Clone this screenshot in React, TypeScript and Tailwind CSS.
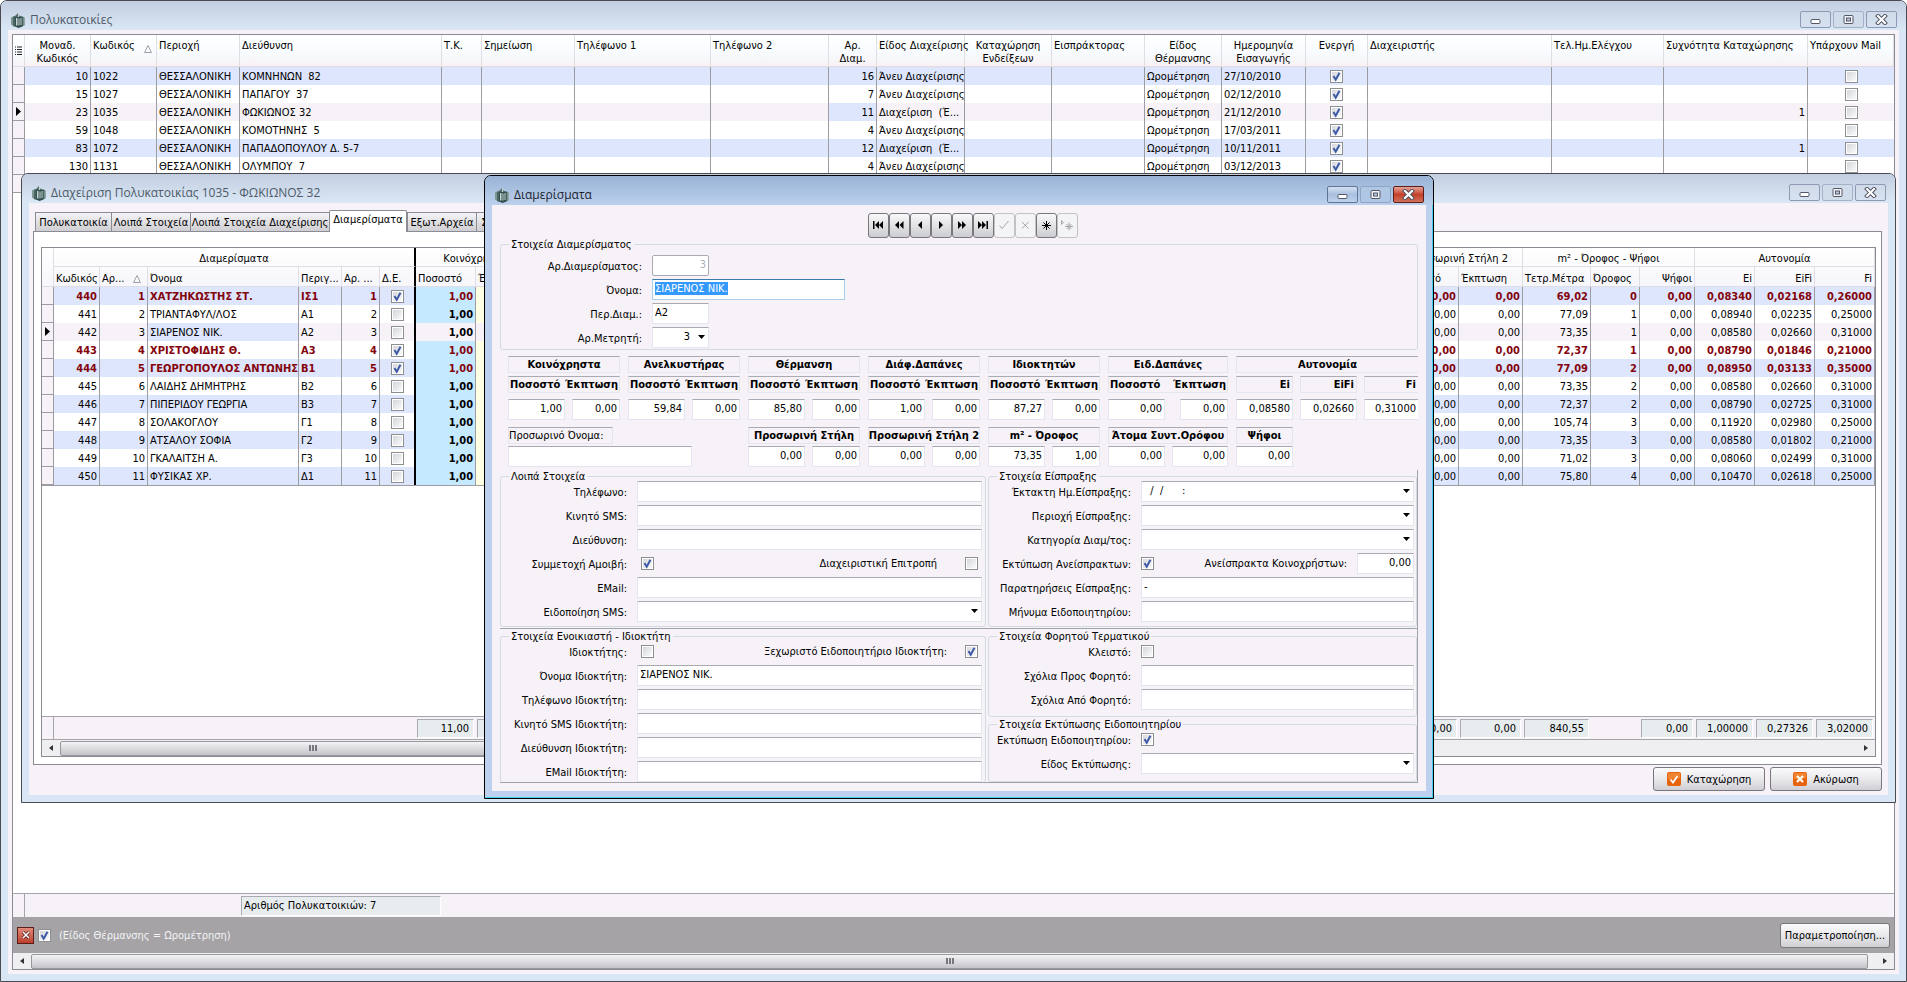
import { useEffect, useRef, type ReactNode } from "react";
import clsx from "clsx";

/* ---------- small shared pieces ---------- */

function AppIcon() {
  return (
    <svg width="16" height="16" viewBox="0 0 16 16" className="shrink-0">
      <path d="M1 5.500l3-1.500v10.500l-3-2z" fill="#7d9490" />
      <path d="M3 5l2.500-1.500v11.500L3 14z" fill="#4a6764" />
      <path d="M12 4l3 2v7l-3 1.500z" fill="#5d7a76" />
      <path d="M13.500 5.500L15 6v6.500l-1.500 1z" fill="#93a8a4" />
      <path d="M5 4.500L8 3l4.500 2v9.500L8.500 16 5 14.500z" fill="#2f4e4d" />
      <path d="M6 6h1.500v7.500H6zM8.500 6.500h1v7h-1zM10.500 6h1v7h-1z" fill="#c9d6d4" />
      <path d="M4.500 4.500L8 1l1 .5V4l3 .5-3.500.8z" fill="#56706e" />
      <path d="M8.500 1v4" stroke="#dfe8e8" strokeWidth=".8" />
    </svg>
  );
}

function WindowButtons({ active }: { active?: boolean }) {
  const base = "flex h-[17px] w-[31px] items-center justify-center rounded-[2px] border";
  const calm = active
    ? "border-[#5f7695] bg-linear-to-b from-[#d3e0f1] via-[#a9c0de] to-[#bdd2ec]"
    : "border-[#8c9bb3] bg-linear-to-b from-[#d0dae9] to-[#d6e2f1]";
  return (
    <div className="flex gap-0.5">
      <button aria-label="Ελαχιστοποίηση" className={clsx(base, calm)}>
        <svg width="11" height="9" viewBox="0 0 11 9">
          <rect x="1" y="4.500" width="9" height="4" rx="1" fill="#fff" stroke="#535666" />
        </svg>
      </button>
      <button
        aria-label="Μεγιστοποίηση"
        className={clsx(base, active ? "border-[#8ea6c6] bg-[#b0c7e4]" : "border-[#a3b2c9] bg-[#d0dcea]")}
      >
        <svg width="11" height="9" viewBox="0 0 11 9">
          <rect x="1" y=".5" width="9" height="8" rx="1" fill="#f2f4f8" stroke="#535666" />
          <rect x="3.500" y="3" width="4" height="3" fill="#b9c9de" stroke="#535666" />
        </svg>
      </button>
      <button
        aria-label="Κλείσιμο"
        className={clsx(
          base,
          active ? "border-[#5c1d1a] bg-linear-to-b from-[#e3a397] via-[#c4402a] to-[#d0705a]" : calm,
        )}
      >
        <svg width="13" height="11" viewBox="0 0 13 11">
          <path d="M3 2l7 7M10 2L3 9" stroke="#4a4d5c" strokeWidth="4" strokeLinecap="square" />
          <path d="M3 2l7 7M10 2L3 9" stroke="#fff" strokeWidth="2.200" strokeLinecap="square" />
        </svg>
      </button>
    </div>
  );
}

function Window({
  title,
  active,
  className,
  children,
}: {
  title: string;
  active?: boolean;
  className?: string;
  children: ReactNode;
}) {
  return (
    <section
      className={clsx(
        "flex flex-col overflow-hidden rounded-t-[7px] border",
        active ? "border-black bg-[#bdd1ee] shadow-[inset_-1px_-1px_0_#3fd0f0]" : "border-[#4a4a50] bg-[#d9e6f6]",
        className,
      )}
    >
      <header
        className={clsx(
          "flex h-[29px] shrink-0 items-center justify-between bg-linear-to-b pr-[9px] pl-[9px] pt-2",
          active ? "from-[#9ab3d6] to-[#bbd0ec]" : "from-[#c3cfe1] to-[#dae7f5]",
        )}
      >
        <h1
          className={clsx(
            "flex items-center gap-1 font-['Open_Sans',sans-serif] text-xs",
            active ? "text-[#1c2430]" : "text-[#4e5a68]",
          )}
        >
          <AppIcon />
          {title}
        </h1>
        <WindowButtons active={active} />
      </header>
      <div className="mx-[7px] mb-[7px] flex min-h-0 flex-1 flex-col bg-[#f6f2f7]">{children}</div>
    </section>
  );
}

function Check({ id, label, checked }: { id?: string; label?: string; checked?: boolean }) {
  return (
    <span className="relative inline-block size-[13px] align-middle">
      <input
        id={id}
        aria-label={label}
        type="checkbox"
        defaultChecked={checked}
        className="peer block size-[13px] appearance-none border border-[#8e8f8f] bg-linear-to-br from-[#cfd2d8] to-white ring-1 ring-white ring-inset"
      />
      <svg
        viewBox="0 0 13 13"
        className="pointer-events-none absolute inset-0 hidden size-[13px] peer-checked:block"
      >
        <path d="M3.500 6l2.200 3.800L9.500 2.800" fill="none" stroke="#3f5aa5" strokeWidth="2" />
      </svg>
    </span>
  );
}

function Caret() {
  return (
    <svg width="7" height="4" viewBox="0 0 7 4" className="pointer-events-none absolute top-2 right-1">
      <path d="M0 0h7L3.500 4z" />
    </svg>
  );
}

const box =
  "block h-[21px] border border-[#e3e6ee] border-t-[#aaaab2] bg-white px-0.5 pb-0.5 text-[11px] leading-4 outline-none";

function Num({ value, label, className }: { value: string; label: string; className?: string }) {
  return (
    <input aria-label={label} defaultValue={value} className={clsx(box, "min-w-0 text-right", className)} />
  );
}

function Row({
  id,
  label,
  labelWidth,
  children,
}: {
  id: string;
  label: string;
  labelWidth: string;
  children: ReactNode;
}) {
  return (
    <div className="flex h-[21px] items-center">
      <label htmlFor={id} className={clsx("mr-2.5 shrink-0 pt-0.5 text-right whitespace-nowrap", labelWidth)}>
        {label}
      </label>
      {children}
    </div>
  );
}

function TextRow({ id, label, labelWidth, value }: { id: string; label: string; labelWidth: string; value?: string }) {
  return (
    <Row id={id} label={label} labelWidth={labelWidth}>
      <input id={id} defaultValue={value} className={clsx(box, "min-w-0 flex-1")} />
    </Row>
  );
}

function SelectRow({ id, label, labelWidth, value }: { id: string; label: string; labelWidth: string; value?: string }) {
  return (
    <Row id={id} label={label} labelWidth={labelWidth}>
      <span className="relative flex-1">
        <select id={id} className={clsx(box, "w-full appearance-none")}>
          <option>{value}</option>
        </select>
        <Caret />
      </span>
    </Row>
  );
}

function Group({ title, className, children }: { title: string; className?: string; children: ReactNode }) {
  return (
    <fieldset className={clsx("min-w-0 rounded-[3px] border border-[#d3dbe2]", className)}>
      <legend className="ml-2 h-[9px] px-0.5 leading-[9px] whitespace-nowrap">{title}</legend>
      {children}
    </fieldset>
  );
}

function ScrollBar({ thumb }: { thumb: string }) {
  return (
    <div className="flex h-4 shrink-0 items-center bg-[#efeef0]">
      <button aria-label="Αριστερά" className="flex h-4 w-[18px] items-center justify-center">
        <svg width="4" height="6" viewBox="0 0 4 6">
          <path d="M4 0v6L0 3z" fill="#333" />
        </svg>
      </button>
      <div
        className={clsx(
          "flex h-[15px] items-center justify-center gap-px rounded-[2px] border border-[#97979d] bg-linear-to-b from-[#f3f3f5] via-[#dcdce0] to-[#c3c3c9]",
          thumb,
        )}
      >
        <i className="h-1.5 w-0.5 bg-[#77777d]" />
        <i className="h-1.5 w-0.5 bg-[#77777d]" />
        <i className="h-1.5 w-0.5 bg-[#77777d]" />
      </div>
      <button aria-label="Δεξιά" className="ml-auto flex h-4 w-[18px] items-center justify-center">
        <svg width="4" height="6" viewBox="0 0 4 6">
          <path d="M0 0v6l4-3z" fill="#333" />
        </svg>
      </button>
    </div>
  );
}

function RowMarker() {
  return (
    <svg width="5" height="9" viewBox="0 0 5 9" className="mx-auto">
      <path d="M0 0v9l5-4.500z" />
    </svg>
  );
}

const SortMark = () => (
  <svg width="8" height="8" viewBox="0 0 8 8">
    <path d="M4 .5L7.500 7.500h-7z" fill="none" stroke="#a0a0a6" />
  </svg>
);

/* ---------- buildings grid ---------- */

const buildings = [
  { id: 10, code: 1022, address: "ΚΟΜΝΗΝΩΝ  82", flats: 16, kind: "Άνευ Διαχείρισης", date: "27/10/2010", freq: "" },
  { id: 15, code: 1027, address: "ΠΑΠΑΓΟΥ  37", flats: 7, kind: "Άνευ Διαχείρισης", date: "02/12/2010", freq: "" },
  { id: 23, code: 1035, address: "ΦΩΚΙΩΝΟΣ 32", flats: 11, kind: "Διαχείριση  (Έ...", date: "21/12/2010", freq: "1" },
  { id: 59, code: 1048, address: "ΚΟΜΟΤΗΝΗΣ  5", flats: 4, kind: "Άνευ Διαχείρισης", date: "17/03/2011", freq: "" },
  { id: 83, code: 1072, address: "ΠΑΠΑΔΟΠΟΥΛΟΥ Δ. 5-7", flats: 12, kind: "Διαχείριση  (Έ...", date: "10/11/2011", freq: "1" },
  { id: 130, code: 1131, address: "ΟΛΥΜΠΟΥ  7", flats: 4, kind: "Άνευ Διαχείρισης", date: "03/12/2013", freq: "" },
];

const cell = "h-[18px] overflow-hidden border-r border-[#9c9ca2] px-0.5 whitespace-pre";
const marker = "h-[18px] border-r border-b border-[#9c9ca2] bg-[#f6f2f7]";
const headCell = "border-r border-[#dedee4] px-0.5 pt-1 align-top font-normal";

function BuildingsTable() {
  const heads = [
    ["Μοναδ. Κωδικός", "text-center"],
    ["Κωδικός", "text-left"],
    ["Περιοχή", "text-left"],
    ["Διεύθυνση", "text-left"],
    ["Τ.Κ.", "text-left"],
    ["Σημείωση", "text-left"],
    ["Τηλέφωνο 1", "text-left"],
    ["Τηλέφωνο 2", "text-left"],
    ["Αρ. Διαμ.", "text-center"],
    ["Είδος Διαχείρισης", "text-left whitespace-nowrap"],
    ["Καταχώρηση Ενδείξεων", "text-center"],
    ["Εισπράκτορας", "text-left"],
    ["Είδος Θέρμανσης", "text-center"],
    ["Ημερομηνία Εισαγωγής", "text-center"],
    ["Ενεργή", "text-center"],
    ["Διαχειριστής", "text-left"],
    ["Τελ.Ημ.Ελέγχου", "text-left"],
    ["Συχνότητα Καταχώρησης", "text-left whitespace-nowrap"],
    ["Υπάρχουν Mail", "text-left whitespace-nowrap"],
  ];
  return (
    <table className="w-full table-fixed border-separate border-spacing-0">
      <colgroup>
        <col className="w-[12px]" />
        <col className="w-[66px]" />
        <col className="w-[66px]" />
        <col className="w-[83px]" />
        <col className="w-[202px]" />
        <col className="w-[40px]" />
        <col className="w-[93px]" />
        <col className="w-[136px]" />
        <col className="w-[118px]" />
        <col className="w-[48px]" />
        <col className="w-[88px]" />
        <col className="w-[87px]" />
        <col className="w-[93px]" />
        <col className="w-[77px]" />
        <col className="w-[84px]" />
        <col className="w-[62px]" />
        <col />
        <col className="w-[112px]" />
        <col className="w-[144px]" />
        <col className="w-[86px]" />
      </colgroup>
      <thead>
        <tr className="h-8 bg-linear-to-b from-white via-[#f8fcfe] to-[#f7f1f5] leading-[13px]">
          <th className="border-r border-b border-[#dedee4] align-middle" aria-label="Στήλες">
            <svg width="7" height="10" viewBox="0 0 7 10" className="mx-auto">
              <path d="M0 1h1M2 1h5M0 3.500h1M2 3.500h5M0 6h1M2 6h5M0 8.500h1M2 8.500h5" stroke="#222" />
            </svg>
          </th>
          {heads.map(([text, align], i) => (
            <th key={text} className={clsx(headCell, "border-b border-b-[#e6d8dc]", align)}>
              {i === 1 ? (
                <span className="flex justify-between pr-0.5">
                  {text}
                  <span className="pt-1.5">
                    <SortMark />
                  </span>
                </span>
              ) : (
                text
              )}
            </th>
          ))}
        </tr>
      </thead>
      <tbody>
        {buildings.map((b, i) => {
          const current = b.code === 1035;
          return (
            <tr key={b.id} className={current ? "bg-[#f6f2f7]" : i % 4 === 0 ? "bg-[#dee6fe]" : "bg-white"}>
              <td className={marker}>{current && <RowMarker />}</td>
              <td className={clsx(cell, "text-right")}>{b.id}</td>
              <td className={cell}>{b.code}</td>
              <td className={cell}>ΘΕΣΣΑΛΟΝΙΚΗ</td>
              <td className={cell}>{b.address}</td>
              <td className={cell} />
              <td className={cell} />
              <td className={cell} />
              <td className={cell} />
              <td className={clsx(cell, "text-right", current && "bg-[#dee6fe]")}>{b.flats}</td>
              <td className={cell}>{b.kind}</td>
              <td className={cell} />
              <td className={cell} />
              <td className={cell}>Ωρομέτρηση</td>
              <td className={cell}>{b.date}</td>
              <td className={clsx(cell, "text-center leading-none")}>
                <Check label={`Ενεργή ${b.code}`} checked />
              </td>
              <td className={cell} />
              <td className={cell} />
              <td className={clsx(cell, "text-right")}>{b.freq}</td>
              <td className={clsx(cell, "border-r-0 text-center leading-none")}>
                <Check label={`Υπάρχουν Mail ${b.code}`} />
              </td>
            </tr>
          );
        })}
        <tr>
          <td className={marker} />
        </tr>
      </tbody>
    </table>
  );
}

/* ---------- apartments grid ---------- */

const apartments = [
  { id: 440, no: 1, name: "ΧΑΤΖΗΚΩΣΤΗΣ ΣΤ.", desc: "ΙΣ1", de: true, m2: "69,02", floor: 0, ei: "0,08340", eifi: "0,02168", fi: "0,26000" },
  { id: 441, no: 2, name: "ΤΡΙΑΝΤΑΦΥΛ/ΛΟΣ", desc: "Α1", de: false, m2: "77,09", floor: 1, ei: "0,08940", eifi: "0,02235", fi: "0,25000" },
  { id: 442, no: 3, name: "ΣΙΑΡΕΝΟΣ ΝΙΚ.", desc: "Α2", de: false, m2: "73,35", floor: 1, ei: "0,08580", eifi: "0,02660", fi: "0,31000" },
  { id: 443, no: 4, name: "ΧΡΙΣΤΟΦΙΔΗΣ Θ.", desc: "Α3", de: true, m2: "72,37", floor: 1, ei: "0,08790", eifi: "0,01846", fi: "0,21000" },
  { id: 444, no: 5, name: "ΓΕΩΡΓΟΠΟΥΛΟΣ ΑΝΤΩΝΗΣ", desc: "Β1", de: true, m2: "77,09", floor: 2, ei: "0,08950", eifi: "0,03133", fi: "0,35000" },
  { id: 445, no: 6, name: "ΛΑΙΔΗΣ ΔΗΜΗΤΡΗΣ", desc: "Β2", de: false, m2: "73,35", floor: 2, ei: "0,08580", eifi: "0,02660", fi: "0,31000" },
  { id: 446, no: 7, name: "ΠΙΠΕΡΙΔΟΥ ΓΕΩΡΓΙΑ", desc: "Β3", de: false, m2: "72,37", floor: 2, ei: "0,08790", eifi: "0,02725", fi: "0,31000" },
  { id: 447, no: 8, name: "ΣΟΛΑΚΟΓΛΟΥ", desc: "Γ1", de: false, m2: "105,74", floor: 3, ei: "0,11920", eifi: "0,02980", fi: "0,25000" },
  { id: 448, no: 9, name: "ΑΤΣΑΛΟΥ ΣΟΦΙΑ", desc: "Γ2", de: false, m2: "73,35", floor: 3, ei: "0,08580", eifi: "0,01802", fi: "0,21000" },
  { id: 449, no: 10, name: "ΓΚΑΛΑΙΤΣΗ Α.", desc: "Γ3", de: false, m2: "71,02", floor: 3, ei: "0,08060", eifi: "0,02499", fi: "0,31000" },
  { id: 450, no: 11, name: "ΦΥΣΙΚΑΣ ΧΡ.", desc: "Δ1", de: false, m2: "75,80", floor: 4, ei: "0,10470", eifi: "0,02618", fi: "0,25000" },
];

function ApartmentCols() {
  return (
    <colgroup>
      <col className="w-[12px]" />
      <col className="w-[46px]" />
      <col className="w-[48px]" />
      <col className="w-[151px]" />
      <col className="w-[43px]" />
      <col className="w-[38px]" />
      <col className="w-[36px]" />
      <col className="w-[60px]" />
      <col className="w-[60px]" />
      <col />
      <col className="w-[64px]" />
      <col className="w-[64px]" />
      <col className="w-[68px]" />
      <col className="w-[49px]" />
      <col className="w-[55px]" />
      <col className="w-[60px]" />
      <col className="w-[60px]" />
      <col className="w-[60px]" />
    </colgroup>
  );
}

function ApartmentsTable() {
  const group = "h-[19px] border-r border-b border-[#dedee4] pt-0.5 text-center font-normal whitespace-nowrap";
  const head = "h-5 overflow-hidden border-r border-b border-[#dedee4] px-0.5 pt-1 font-normal whitespace-nowrap";
  return (
    <table className="w-full table-fixed border-separate border-spacing-0 border-b border-[#9c9ca2]">
      <ApartmentCols />
      <thead className="bg-linear-to-b from-white to-[#f6f6fb]">
        <tr>
          <th rowSpan={2} className={group} aria-label="Δείκτης" />
          <th colSpan={6} className={clsx(group, "border-r-2 border-r-black")}>Διαμερίσματα</th>
          <th colSpan={2} className={group}>Κοινόχρηστα</th>
          <th className={group} />
          <th colSpan={2} className={group}>Προσωρινή Στήλη 2</th>
          <th colSpan={3} className={group}>m² - Όροφος - Ψήφοι</th>
          <th colSpan={3} className={group}>Αυτονομία</th>
        </tr>
        <tr>
          <th className={clsx(head, "text-left")}>Κωδικός</th>
          <th className={clsx(head, "text-left")}>
            <span className="flex items-center justify-between pr-1">
              Αρ... <SortMark />
            </span>
          </th>
          <th className={clsx(head, "text-left")}>Όνομα</th>
          <th className={clsx(head, "text-left")}>Περιγ...</th>
          <th className={clsx(head, "text-left")}>Αρ. ...</th>
          <th className={clsx(head, "border-r-2 border-r-black text-left")}>Δ.Ε.</th>
          <th className={clsx(head, "text-left")}>Ποσοστό</th>
          <th className={clsx(head, "text-left")}>Έκπτωση</th>
          <th className={head} />
          <th className={clsx(head, "text-left")}>Ποσοστό</th>
          <th className={clsx(head, "text-left")}>Έκπτωση</th>
          <th className={clsx(head, "text-left")}>Τετρ.Μέτρα</th>
          <th className={clsx(head, "text-left")}>Όροφος</th>
          <th className={clsx(head, "text-right")}>Ψήφοι</th>
          <th className={clsx(head, "text-right")}>Ei</th>
          <th className={clsx(head, "text-right")}>EiFi</th>
          <th className={clsx(head, "text-right")}>Fi</th>
        </tr>
      </thead>
      <tbody>
        {apartments.map((a, i) => {
          const current = a.id === 442;
          const right = clsx(cell, "text-right");
          return (
            <tr
              key={a.id}
              className={clsx(
                current ? "bg-[#f6f2f7]" : i % 2 === 0 ? "bg-[#dee6fe]" : "bg-white",
                a.de && "font-bold text-[#84040c]",
              )}
            >
              <td className={marker}>{current && <RowMarker />}</td>
              <td className={right}>{a.id}</td>
              <td className={right}>{a.no}</td>
              <td className={clsx(cell, current && "bg-[#dee6fe]")}>{a.name}</td>
              <td className={cell}>{a.desc}</td>
              <td className={right}>{a.no}</td>
              <td className={clsx(cell, "border-r-2 border-r-black text-center leading-none")}>
                <Check label={`Δ.Ε. ${a.id}`} checked={a.de} />
              </td>
              <td className={clsx(right, "font-bold", !current && "bg-[#c5e9ff]")}>1,00</td>
              <td className={clsx(cell, !current && "bg-[#ffffe4]")} />
              <td className={cell} />
              <td className={right}>0,00</td>
              <td className={right}>0,00</td>
              <td className={right}>{a.m2}</td>
              <td className={right}>{a.floor}</td>
              <td className={right}>0,00</td>
              <td className={right}>{a.ei}</td>
              <td className={right}>{a.eifi}</td>
              <td className={right}>{a.fi}</td>
            </tr>
          );
        })}
      </tbody>
    </table>
  );
}

function ApartmentTotals() {
  const totals = ["11,00", "", null, "0,00", "0,00", "840,55", null, "0,00", "1,00000", "0,27326", "3,02000"];
  return (
    <table className="w-full table-fixed border-separate border-spacing-0 border-y border-[#a4a4aa] bg-[#f6f2f7]">
      <ApartmentCols />
      <tbody>
        <tr>
          <td className="h-[22px] border-r border-[#a4a4aa]" />
          <td colSpan={6} />
          {totals.map((t, i) => (
            <td key={i} className="pr-0.5 pl-px">
              {t !== null && (
                <div className="h-[19px] border border-white border-t-[#aaaab2] border-l-[#aaaab2] bg-[#e7ecee] pr-1 text-right leading-[17px]">
                  {t}
                </div>
              )}
            </td>
          ))}
        </tr>
      </tbody>
    </table>
  );
}

const pushButton =
  "flex items-center justify-center rounded-[3px] border border-[#77777d] bg-linear-to-b from-[#fbfbfc] via-[#e9e9ec] to-[#d0d0d4] text-black";

function ManagementWindow() {
  const tab = "flex h-[19px] items-center border border-b-0 border-[#8b8b93] whitespace-nowrap";
  const idle = "-mr-px justify-center bg-linear-to-b from-[#f4f3f5] to-[#cfced2]";
  return (
    <Window
      title="Διαχείριση Πολυκατοικίας 1035 - ΦΩΚΙΩΝΟΣ 32"
      className="absolute top-[173px] right-[11px] left-[21px] h-[630px]"
    >
      <div className="flex min-h-0 flex-1 flex-col pt-2 pr-1.5 pb-1 pl-1">
        <nav className="flex h-5 shrink-0 items-end pl-0.5">
          <button className={clsx(tab, idle, "w-[77px]")}>Πολυκατοικία</button>
          <button className={clsx(tab, idle, "w-[80px]")}>Λοιπά Στοιχεία</button>
          <button className={clsx(tab, idle, "w-[140px]")}>Λοιπά Στοιχεία Διαχείρισης</button>
          <button className="z-10 -mb-px h-[22px] w-[78px] rounded-t-[2px] border border-b-0 border-[#8b8b93] bg-white pb-1 whitespace-nowrap">
            Διαμερίσματα
          </button>
          <button className={clsx(tab, idle, "w-[70px]")}>Εξωτ.Αρχεία</button>
          <button className={clsx(tab, idle, "w-[53px]")}>Στοιχεία</button>
        </nav>
        <div className="flex min-h-0 flex-1 flex-col border border-[#8b8b93] bg-white pt-[15px] pr-[5px] pb-[7px] pl-[7px]">
          <div className="flex min-h-0 flex-1 flex-col border border-[#8b8b93]">
            <div className="min-h-0 flex-1">
              <ApartmentsTable />
            </div>
            <ApartmentTotals />
            <ScrollBar thumb="w-[505px]" />
          </div>
        </div>
        <div className="flex justify-end gap-[5px] pt-0.5">
          <button className={clsx(pushButton, "h-6 w-28 gap-1.5")}>
            <svg width="14" height="14" viewBox="0 0 14 14">
              <rect width="14" height="14" rx="2" fill="#e8640c" />
              <path d="M1 1h12v5Q7 8 1 7z" fill="#f79a4a" opacity=".6" />
              <path d="M3.500 7.500L6 10.500 10.500 4" fill="none" stroke="#fff" strokeWidth="1.800" />
            </svg>
            Καταχώρηση
          </button>
          <button className={clsx(pushButton, "h-6 w-28 gap-1.5")}>
            <svg width="14" height="14" viewBox="0 0 14 14">
              <rect width="14" height="14" rx="2" fill="#e8640c" />
              <path d="M1 1h12v5Q7 8 1 7z" fill="#f79a4a" opacity=".6" />
              <path d="M4 4l6 6M10 4l-6 6" stroke="#fff" strokeWidth="2.200" />
            </svg>
            Ακύρωση
          </button>
        </div>
      </div>
    </Window>
  );
}

/* ---------- apartment dialog ---------- */

const navButtons = [
  { label: "Πρώτο", d: "M1 2h1.500v8H1zM7 2v8L3 6zM11 2v8L7 6z" },
  { label: "Προηγούμενη σελίδα", d: "M6 2v8L2 6zM10.500 2v8l-4-4z" },
  { label: "Προηγούμενο", d: "M8 2v8L4 6z" },
  { label: "Επόμενο", d: "M4 2v8l4-4z" },
  { label: "Επόμενη σελίδα", d: "M2 2v8l4-4zM6 2v8l4-4z" },
  { label: "Τελευταίο", d: "M1 2v8l4-4zM5 2v8l4-4zM9.500 2H11v8H9.500z" },
  { label: "Αποθήκευση", stroke: "M1.500 6.500L4 9.500 10.500 2", disabled: true },
  { label: "Ακύρωση αλλαγών", stroke: "M3 3l6.500 6.500M9.500 3L3 9.500", disabled: true },
  { label: "Νέο", stroke: "M6.500 2v9M2 6.500h9M3.500 3.500l6 6M9.500 3.500l-6 6" },
  { label: "Νέο αντίγραφο", stroke: "M8 3.500v8M4 7.500h8M5.500 5l5 5M10.500 5l-5 5M.5 1.500v4l2-2z", disabled: true },
];

const caption = "h-[17px] border border-[#e3e6ee] border-t-[#aaaab2] leading-[15px] whitespace-nowrap";

function PercentGroup({
  title,
  values,
  second,
  secondValues,
}: {
  title: string;
  values: [string, string];
  second?: string;
  secondValues?: [string, string];
}) {
  return (
    <div>
      <div className={clsx(caption, "mb-[3px] text-center font-bold")}>{title}</div>
      <div className={clsx(caption, "flex justify-between px-px font-bold")}>
        <span>Ποσοστό</span>
        <span>Έκπτωση</span>
      </div>
      <div className="mt-1.5 flex justify-between">
        <Num label={`${title} Ποσοστό`} value={values[0]} className="w-[57px]" />
        <Num label={`${title} Έκπτωση`} value={values[1]} className="w-[48px]" />
      </div>
      {second && secondValues && (
        <>
          <div className={clsx(caption, "mt-[7px] flex justify-center font-bold")}>{second}</div>
          <div className="mt-0.5 flex gap-[7px]">
            <Num label={`${second} α`} value={secondValues[0]} className="w-[57px]" />
            <Num label={`${second} β`} value={secondValues[1]} className="flex-1" />
          </div>
        </>
      )}
    </div>
  );
}

function ApartmentDialog() {
  const nameRef = useRef<HTMLInputElement>(null);

  useEffect(() => {
    nameRef.current?.focus({ preventScroll: true });
    nameRef.current?.select();
  }, []);

  const top = "w-[141px]";
  const left = "w-[126px]";
  const right = "w-[142px]";

  return (
    <Window title="Διαμερίσματα" active className="absolute top-[175px] left-[484px] w-[950px]">
      <div className="flex flex-col py-2 pr-2 pl-2">
        <div className="flex pl-[368px]">
          {navButtons.map((b) => (
            <button
              key={b.label}
              aria-label={b.label}
              disabled={b.disabled}
              className={clsx(
                "flex h-[25px] w-[21px] items-center justify-center rounded-[3px] border",
                b.disabled
                  ? "border-[#c2c2c6] bg-[#f4f3f5] text-[#a5a5aa]"
                  : "border-[#77777d] bg-linear-to-b from-[#f8f8f9] to-[#cdcdd1] text-black",
              )}
            >
              <svg width="13" height="13" viewBox="0 0 13 13" className="shrink-0">
                {b.d ? (
                  <path d={b.d} fill="currentColor" />
                ) : (
                  <path d={b.stroke} fill="none" stroke="currentColor" />
                )}
              </svg>
            </button>
          ))}
        </div>

        <Group title="Στοιχεία Διαμερίσματος" className="mt-0.5">
          <div className="flex flex-col gap-[3px] pt-1.5 pb-px">
            <Row id="flat-no" label="Αρ.Διαμερίσματος:" labelWidth={top}>
              <input
                id="flat-no"
                disabled
                defaultValue="3"
                className={clsx(box, "w-[57px] rounded-[2px] border-[#aaaab2]! text-right text-[#b0b0b6]")}
              />
            </Row>
            <Row id="flat-name" label="Όνομα:" labelWidth={top}>
              <input
                id="flat-name"
                ref={nameRef}
                defaultValue="ΣΙΑΡΕΝΟΣ ΝΙΚ."
                className={clsx(
                  box,
                  "w-[193px] border-[#a9cdec]! border-t-[#3d7bad]! selection:bg-[#3399ff] selection:text-white",
                )}
              />
            </Row>
            <Row id="flat-desc" label="Περ.Διαμ.:" labelWidth={top}>
              <input id="flat-desc" defaultValue="Α2" className={clsx(box, "w-[57px]")} />
            </Row>
            <Row id="flat-meter" label="Αρ.Μετρητή:" labelWidth={top}>
              <span className="relative">
                <select id="flat-meter" className={clsx(box, "w-[57px] appearance-none pr-[18px] [text-align-last:right]")}>
                  <option>3</option>
                </select>
                <Caret />
              </span>
            </Row>
          </div>
        </Group>

        <div className="mt-1.5 grid grid-cols-[112px_112px_112px_112px_112px_120px_1fr] gap-x-2 pl-2">
          <div className="col-span-2">
            <div className="grid grid-cols-2 gap-2">
              <PercentGroup title="Κοινόχρηστα" values={["1,00", "0,00"]} />
              <PercentGroup title="Ανελκυστήρας" values={["59,84", "0,00"]} />
            </div>
            <label htmlFor="temp-name" className={clsx(caption, "mt-[7px] block w-[105px]")}>
              Προσωρινό Όνομα:
            </label>
            <input id="temp-name" className={clsx(box, "mt-0.5 w-[184px]")} />
          </div>
          <PercentGroup title="Θέρμανση" values={["85,80", "0,00"]} second="Προσωρινή Στήλη" secondValues={["0,00", "0,00"]} />
          <PercentGroup title="Διάφ.Δαπάνες" values={["1,00", "0,00"]} second="Προσωρινή Στήλη 2" secondValues={["0,00", "0,00"]} />
          <PercentGroup title="Ιδιοκτητών" values={["87,27", "0,00"]} second="m² - Όροφος" secondValues={["73,35", "1,00"]} />
          <PercentGroup title="Ειδ.Δαπάνες" values={["0,00", "0,00"]} second="Άτομα Συντ.Ορόφου" secondValues={["0,00", "0,00"]} />
          <div>
            <div className={clsx(caption, "mb-[3px] border-r-0 text-center font-bold")}>Αυτονομία</div>
            <div className="grid grid-cols-[57px_57px_1fr] gap-x-[7px]">
              <div className={clsx(caption, "px-0.5 text-right font-bold")}>Ei</div>
              <div className={clsx(caption, "px-0.5 text-right font-bold")}>EiFi</div>
              <div className={clsx(caption, "border-r-0 px-0.5 text-right font-bold")}>Fi</div>
              <Num label="Ei" value="0,08580" className="mt-1.5" />
              <Num label="EiFi" value="0,02660" className="mt-1.5" />
              <Num label="Fi" value="0,31000" className="mt-1.5 border-r-0" />
              <div className={clsx(caption, "mt-[7px] text-center font-bold")}>Ψήφοι</div>
              <Num label="Ψήφοι" value="0,00" className="col-start-1 mt-0.5" />
            </div>
          </div>
        </div>

        <div className="mt-[3px] border-r border-b border-[#a0a4aa]">
          <div className="grid grid-cols-[486px_1fr] gap-x-0.5 border-b border-[#a0a4aa] pt-0.5 pb-px">
            <Group title="Λοιπά Στοιχεία" className="pr-[3px] pb-1">
              <div className="flex flex-col gap-[3px]">
                <TextRow id="phone" label="Τηλέφωνο:" labelWidth={left} />
                <TextRow id="mobile" label="Κινητό SMS:" labelWidth={left} />
                <TextRow id="address" label="Διεύθυνση:" labelWidth={left} />
                <Row id="fee" label="Συμμετοχή Αμοιβή:" labelWidth={left}>
                  <span className="flex flex-1 items-center pr-1 pl-1">
                    <Check id="fee" checked />
                    <label htmlFor="committee" className="mr-7 ml-auto">
                      Διαχειριστική Επιτροπή
                    </label>
                    <Check id="committee" />
                  </span>
                </Row>
                <TextRow id="email" label="EMail:" labelWidth={left} />
                <SelectRow id="sms" label="Ειδοποίηση SMS:" labelWidth={left} />
              </div>
            </Group>
            <Group title="Στοιχεία Είσπραξης" className="pr-0.5 pb-1">
              <div className="flex flex-col gap-[3px]">
                <SelectRow id="extra-date" label="Έκτακτη Ημ.Είσπραξης:" labelWidth={right} value={"\u00a0\u00a0/\u00a0\u00a0/\u00a0\u00a0\u00a0\u00a0\u00a0\u00a0:"} />
                <SelectRow id="area" label="Περιοχή Είσπραξης:" labelWidth={right} />
                <SelectRow id="category" label="Κατηγορία Διαμ/τος:" labelWidth={right} />
                <Row id="print-unpaid" label="Εκτύπωση Ανείσπρακτων:" labelWidth={right}>
                  <Check id="print-unpaid" checked />
                  <label htmlFor="unpaid" className="mr-2.5 ml-auto">
                    Ανείσπρακτα Κοινοχρήστων:
                  </label>
                  <input id="unpaid" defaultValue="0,00" className={clsx(box, "w-[57px] text-right")} />
                </Row>
                <TextRow id="remarks" label="Παρατηρήσεις Είσπραξης:" labelWidth={right} value="-" />
                <TextRow id="message" label="Μήνυμα Ειδοποιητηρίου:" labelWidth={right} />
              </div>
            </Group>
          </div>

          <div className="grid grid-cols-[486px_1fr] gap-x-0.5 pt-[3px]">
            <Group title="Στοιχεία Ενοικιαστή - Ιδιοκτήτη" className="border-b-0 pr-[3px]">
              <div className="flex flex-col gap-[3px]">
                <Row id="is-owner" label="Ιδιοκτήτης:" labelWidth={left}>
                  <span className="flex flex-1 items-center pr-1 pl-1">
                    <Check id="is-owner" />
                    <label htmlFor="separate" className="mr-[18px] ml-auto">
                      Ξεχωριστό Ειδοποιητήριο Ιδιοκτήτη:
                    </label>
                    <Check id="separate" checked />
                  </span>
                </Row>
                <TextRow id="owner-name" label="Όνομα Ιδιοκτήτη:" labelWidth={left} value="ΣΙΑΡΕΝΟΣ ΝΙΚ." />
                <TextRow id="owner-phone" label="Τηλέφωνο Ιδιοκτήτη:" labelWidth={left} />
                <TextRow id="owner-mobile" label="Κινητό SMS Ιδιοκτήτη:" labelWidth={left} />
                <TextRow id="owner-address" label="Διεύθυνση Ιδιοκτήτη:" labelWidth={left} />
                <TextRow id="owner-email" label="EMail Ιδιοκτήτη:" labelWidth={left} />
              </div>
            </Group>
            <div className="flex flex-col gap-[3px]">
              <Group title="Στοιχεία Φορητού Τερματικού" className="pr-0.5 pb-1.5">
                <div className="flex flex-col gap-[3px]">
                  <Row id="closed" label="Κλειστό:" labelWidth={right}>
                    <Check id="closed" />
                  </Row>
                  <TextRow id="to-handheld" label="Σχόλια Προς Φορητό:" labelWidth={right} />
                  <TextRow id="from-handheld" label="Σχόλια Από Φορητό:" labelWidth={right} />
                </div>
              </Group>
              <Group title="Στοιχεία Εκτύπωσης Ειδοποιητηρίου" className="flex-1 pr-0.5">
                <div className="flex flex-col gap-[3px]">
                  <Row id="print-notice" label="Εκτύπωση Ειδοποιητηρίου:" labelWidth={right}>
                    <Check id="print-notice" checked />
                  </Row>
                  <SelectRow id="print-kind" label="Είδος Εκτύπωσης:" labelWidth={right} />
                </div>
              </Group>
            </div>
          </div>
        </div>
      </div>
    </Window>
  );
}

/* ---------- page ---------- */

export default function App() {
  return (
    <main className="relative flex h-screen w-full flex-col overflow-hidden bg-white font-['DejaVu_Sans_Condensed','DejaVu_Sans',sans-serif] text-[11px] leading-[13px] text-black">
      <Window title="Πολυκατοικίες" className="flex-1">
        <div className="flex min-h-0 flex-1 flex-col p-1">
          <div className="flex min-h-0 flex-1 flex-col border border-[#8b8b93] bg-white">
            <div className="min-h-0 flex-1">
              <BuildingsTable />
            </div>
            <div className="flex h-6 shrink-0 border-t border-[#a4a4aa] bg-[#f6f2f7]">
              <div className="w-3 border-r border-[#a4a4aa]" />
              <div className="mt-0.5 ml-[216px] h-5 w-[200px] border border-white border-t-[#aaaab2] border-l-[#aaaab2] bg-[#e7ecee] pl-0.5 leading-[18px]">
                Αριθμός Πολυκατοικιών: 7
              </div>
            </div>
            <div className="flex h-9 shrink-0 items-center bg-[#a5a3a6] px-1 text-[#f3f3f5]">
              <button
                aria-label="Καθαρισμός φίλτρου"
                className="mr-1 flex size-[17px] items-center justify-center border border-[#5c1d1a] bg-linear-to-b from-[#e08a7c] to-[#bd3d2a]"
              >
                <svg width="8" height="8" viewBox="0 0 8 8">
                  <path d="M1 1l6 6M7 1L1 7" stroke="#4a1a16" strokeWidth="3" />
                  <path d="M1 1l6 6M7 1L1 7" stroke="#fff" strokeWidth="1.600" />
                </svg>
              </button>
              <Check id="filter" checked />
              <label htmlFor="filter" className="ml-2">
                (Είδος Θέρμανσης = Ωρομέτρηση)
              </label>
              <button className={clsx(pushButton, "ml-auto h-[25px] w-[110px]")}>Παραμετροποίηση...</button>
            </div>
            <ScrollBar thumb="mr-2 flex-1" />
          </div>
        </div>
      </Window>
      <ManagementWindow />
      <ApartmentDialog />
    </main>
  );
}
